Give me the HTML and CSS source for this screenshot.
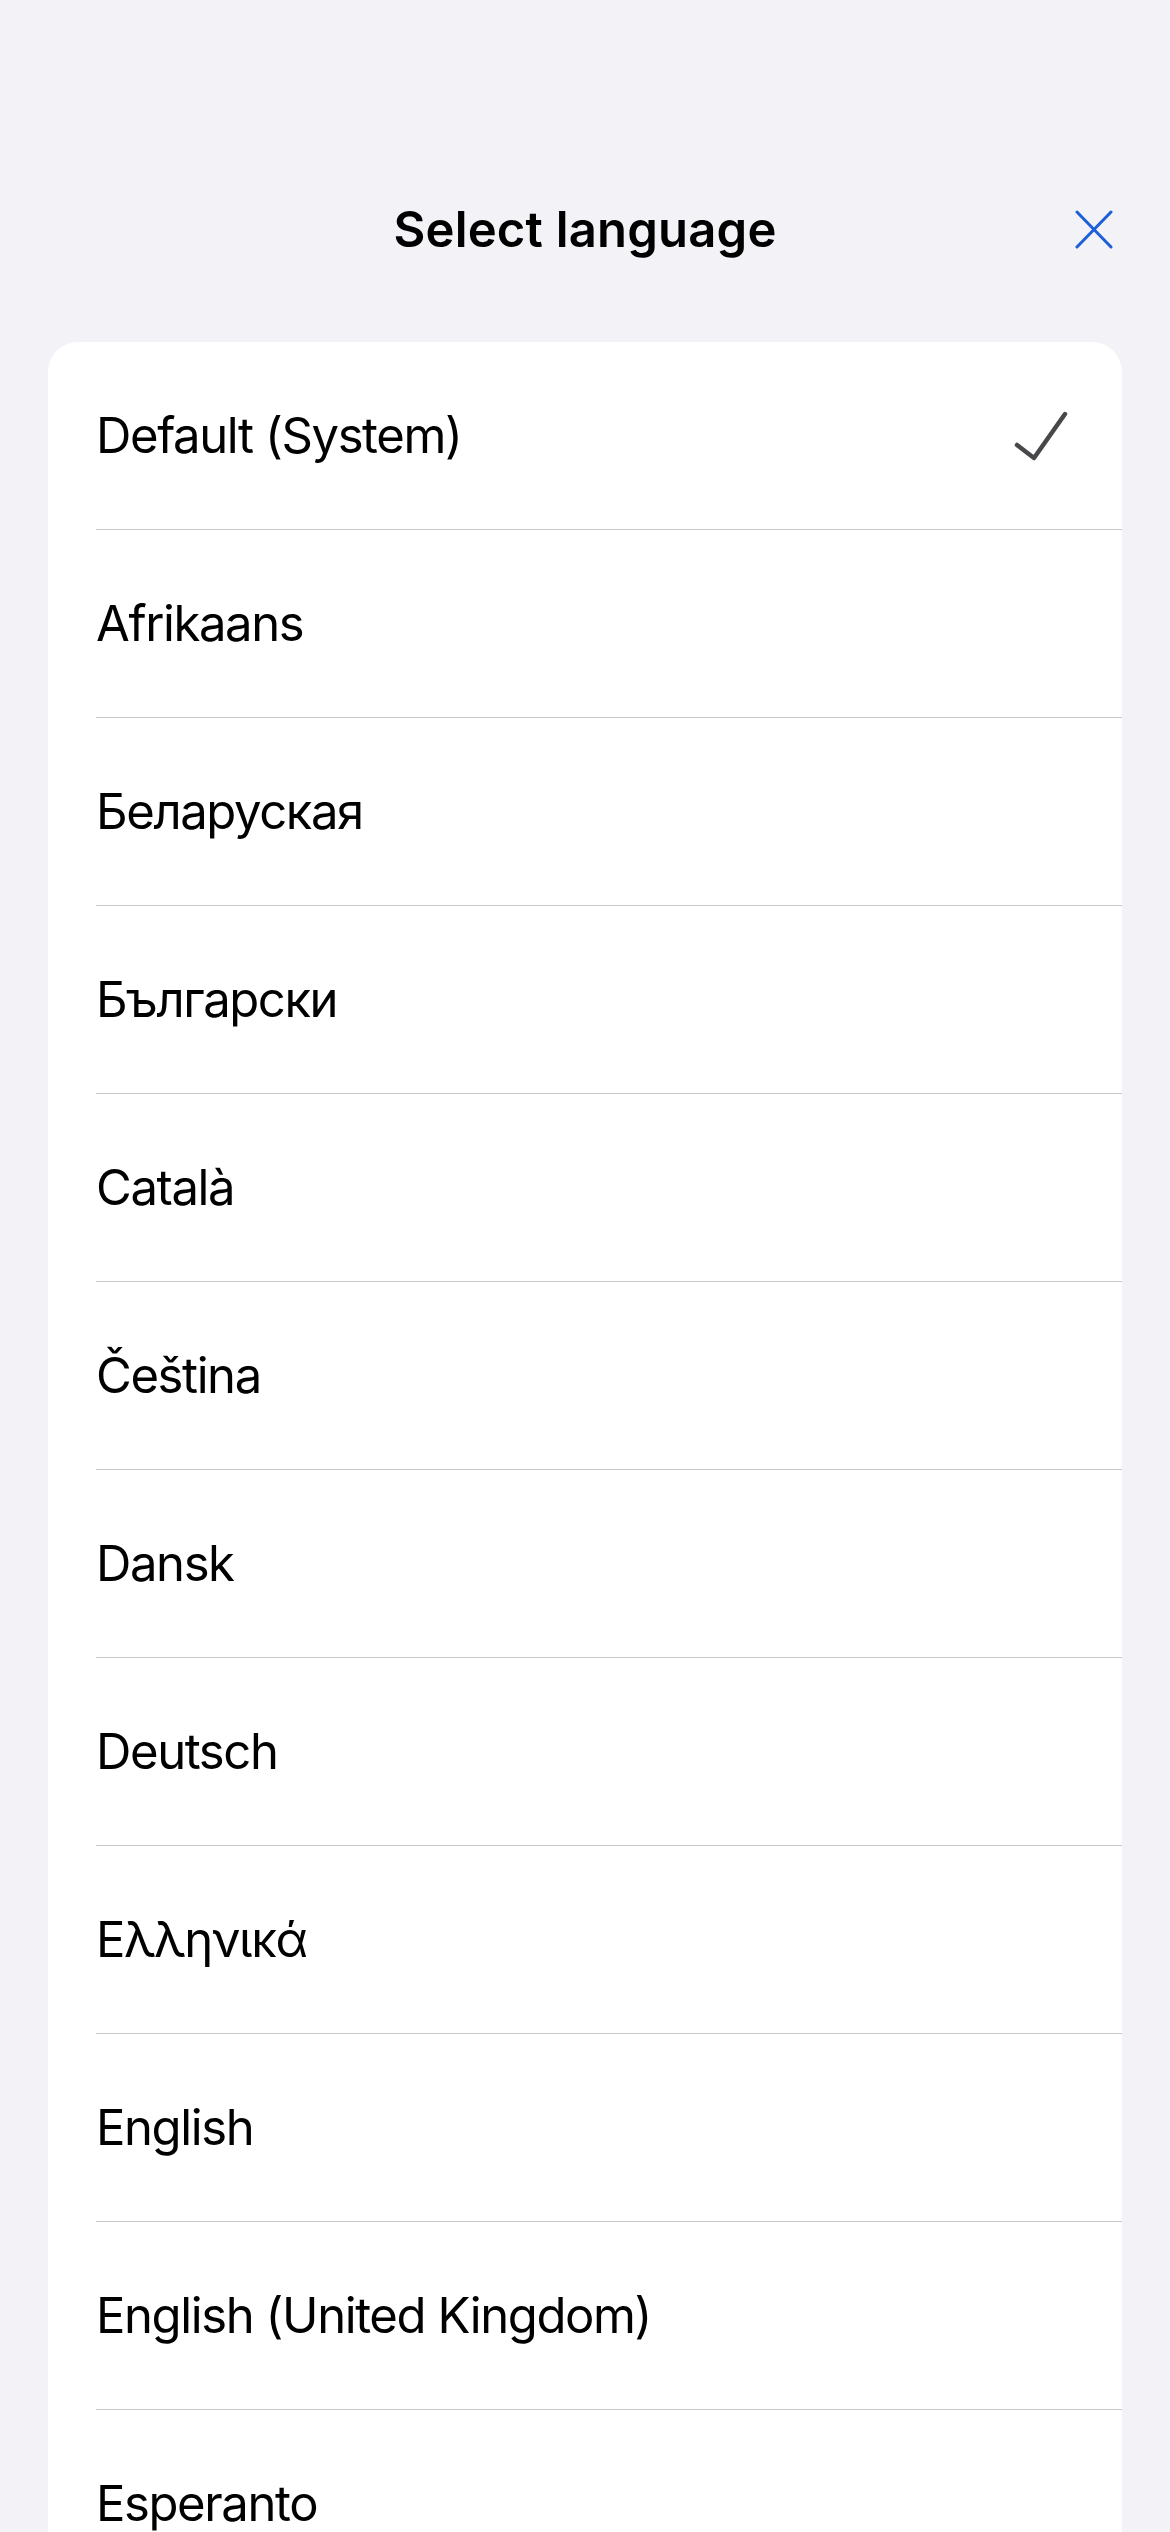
FILE: index.html
```html
<!DOCTYPE html>
<html lang="en">
<head>
<meta charset="utf-8">
<title>Select language</title>
<link rel="stylesheet" href="styles.css">
</head>
<body>
<header class="header">
  <div class="header-side"></div>
  <h1 class="title">Select language</h1>
  <div class="header-side header-end">
    <button class="close" aria-label="Close">
      <svg width="38" height="39" viewBox="0 0 38 39" aria-hidden="true">
        <path d="M2 2 L36 37 M36 2 L2 37" stroke="#1d5fd8" stroke-width="3" stroke-linecap="round" fill="none"/>
      </svg>
    </button>
  </div>
</header>
<ul class="card">
  <li class="row"><div class="row-inner"><span class="label">Default (System)</span>
    <svg class="check" width="56" height="54" viewBox="0 0 56 54" aria-hidden="true">
      <path d="M4 36 L21 49 L52 5" stroke="#48484a" stroke-width="4.5" stroke-linecap="round" stroke-linejoin="round" fill="none"/>
    </svg></div></li>
  <li class="row"><div class="row-inner"><span class="label">Afrikaans</span></div></li>
  <li class="row"><div class="row-inner"><span class="label">Беларуская</span></div></li>
  <li class="row"><div class="row-inner"><span class="label">Български</span></div></li>
  <li class="row"><div class="row-inner"><span class="label">Català</span></div></li>
  <li class="row"><div class="row-inner"><span class="label">Čeština</span></div></li>
  <li class="row"><div class="row-inner"><span class="label">Dansk</span></div></li>
  <li class="row"><div class="row-inner"><span class="label">Deutsch</span></div></li>
  <li class="row"><div class="row-inner"><span class="label">Ελληνικά</span></div></li>
  <li class="row"><div class="row-inner"><span class="label">English</span></div></li>
  <li class="row"><div class="row-inner"><span class="label">English (United Kingdom)</span></div></li>
  <li class="row"><div class="row-inner"><span class="label">Esperanto</span></div></li>
</ul>
</body>
</html>
```

FILE: styles.css
```css
html, body {
  margin: 0;
  padding: 0;
  background: #f2f2f7;
}
body {
  font-family: Inter, "Liberation Sans", Arial, sans-serif;
  color: #000;
  overflow: hidden;
  height: 2532px;
}
.header {
  display: grid;
  grid-template-columns: 1fr auto 1fr;
  align-items: center;
  padding: 199px 57px 82px 57px;
}
.title {
  margin: 0;
  font-size: 49px;
  line-height: 61px;
  font-weight: 600;
  letter-spacing: 0.2px;
}
.header-end {
  display: flex;
  justify-content: flex-end;
}
.close {
  border: 0;
  background: none;
  padding: 0;
  display: flex;
}
.card {
  list-style: none;
  margin: 0 48px;
  padding: 0;
  background: #fff;
  border-radius: 30px 30px 0 0;
}
.row {
  padding-left: 48px;
}
.row-inner {
  display: flex;
  align-items: center;
  justify-content: space-between;
  height: 187px;
  border-bottom: 1px solid #c8c8cc;
  padding-right: 53px;
}
.label {
  font-size: 49px;
  line-height: 61px;
  letter-spacing: -1.4px;
}
.check {
  display: block;
}
```
